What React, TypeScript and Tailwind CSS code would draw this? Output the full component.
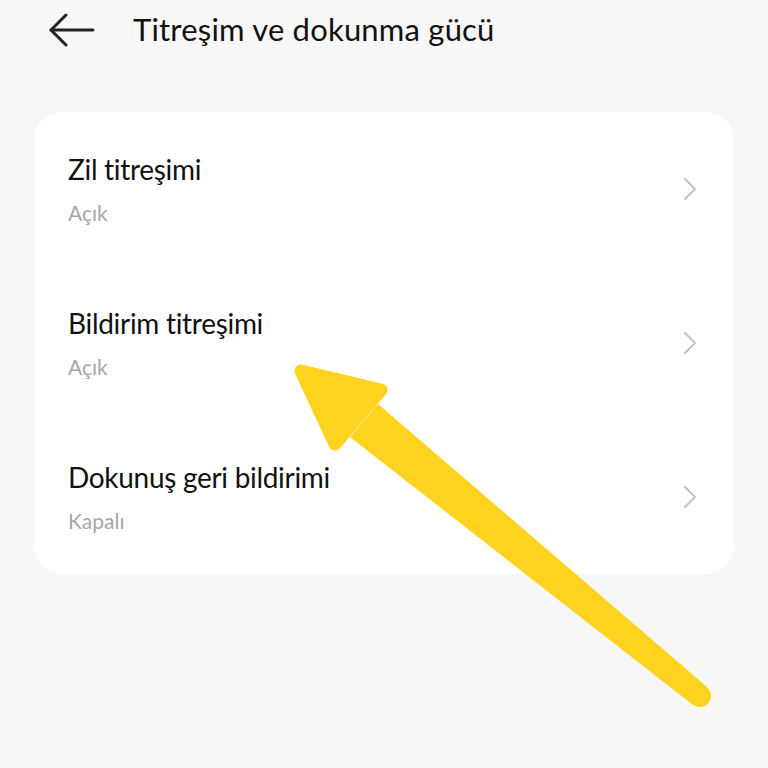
import React from "react"

interface Row {
  title: string
  value: string
}

const rows: Row[] = [
  { title: "Zil titreşimi", value: "Açık" },
  { title: "Bildirim titreşimi", value: "Açık" },
  { title: "Dokunuş geri bildirimi", value: "Kapalı" },
]

const font = { fontFamily: 'Lato, "Noto Sans", sans-serif' }

function BackArrow() {
  return (
    <svg width="46" height="36" viewBox="0 0 46 36" fill="none">
      <path d="M2 18H44" stroke="#222" strokeWidth="3" strokeLinecap="round" />
      <path d="M17 3L2 18L17 33" stroke="#222" strokeWidth="3" strokeLinecap="round" strokeLinejoin="round" />
    </svg>
  )
}

function Chevron() {
  return (
    <svg width="16" height="24" viewBox="0 0 16 24" fill="none">
      <path d="M3 2L13 12L3 22" stroke="#c4c4c4" strokeWidth="2" strokeLinecap="round" strokeLinejoin="round" />
    </svg>
  )
}

// the yellow marker arrow painted over the screenshot
function Marker() {
  return (
    <svg className="absolute inset-0 pointer-events-none" width="768" height="768" viewBox="0 0 768 768">
      <polygon
        points="301,371 381,390 335,444"
        fill="#fdd31f" stroke="#fdd31f" strokeWidth="13" strokeLinejoin="round"
      />
      <polygon points="378,404 707,687 693,705 350,437" fill="#fdd31f" />
      <circle cx="700" cy="696" r="11" fill="#fdd31f" />
    </svg>
  )
}

export default function App() {
  return (
    <div className="relative w-[768px] h-[768px] overflow-hidden bg-[#f7f7f7] [font-variant-ligatures:none]" style={font}>
      {/* header */}
      <div className="flex items-center h-[60px] pl-[49px]">
        <BackArrow />
        <span className="ml-[38px] text-[31px] leading-none text-[#111] pb-[2px] tracking-[0.2px]">Titreşim ve dokunma gücü</span>
      </div>

      {/* list card */}
      <div className="mt-[52px] mx-[34px] bg-white rounded-[28px]">
        {rows.map((r) => (
          <div key={r.title} className="flex items-center h-[154px] pl-[34px] pr-[36px]">
            <div className="flex-1 flex flex-col">
              <span className="text-[28px] leading-[36px] text-[#111] tracking-[-0.3px]">{r.title}</span>
              <span className="mt-[12px] text-[21px] leading-[28px] text-[#a6a6a6]">{r.value}</span>
            </div>
            <Chevron />
          </div>
        ))}
      </div>

      <Marker />
    </div>
  )
}
